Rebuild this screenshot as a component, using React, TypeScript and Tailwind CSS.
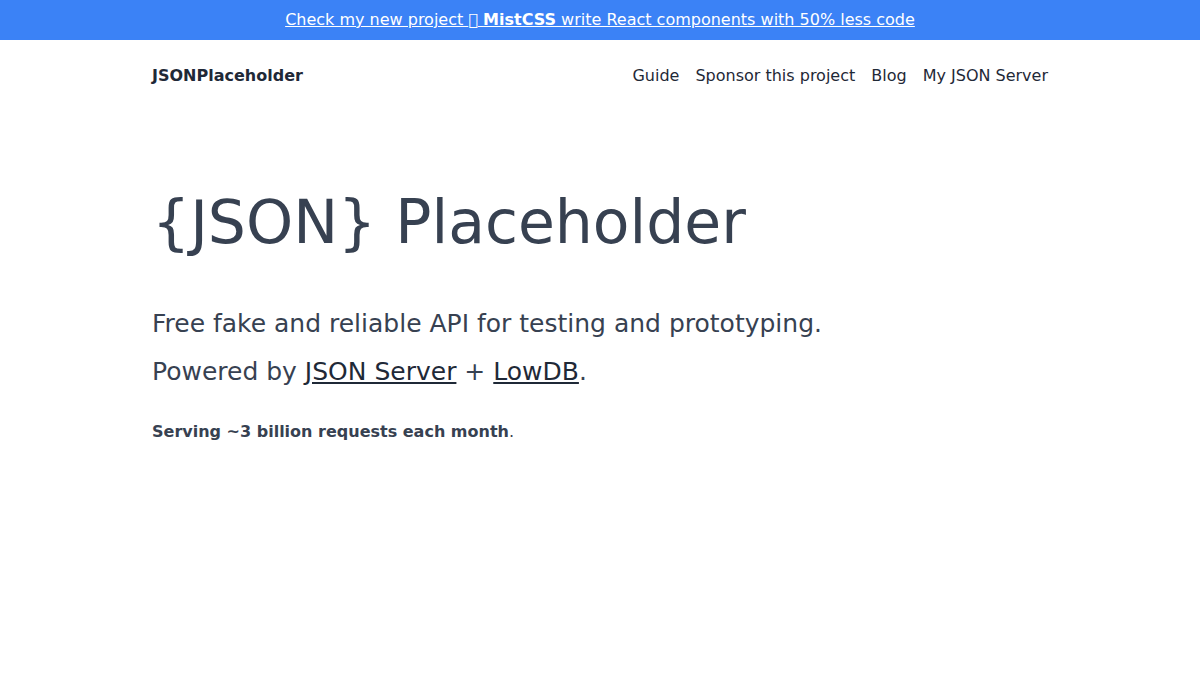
export default function App() {
  return (
    <div className="min-h-screen bg-white font-['DejaVu_Sans',sans-serif] text-[#1f2937] antialiased">
      <div className="bg-[#3b82f6] h-10 flex items-center justify-center text-white">
        <a href="#" className="underline text-base leading-6">Check my new project {"\uE0F0"} <b>MistCSS</b> write React components with 50% less code</a>
      </div>
      <div className="w-[896px] mx-auto">
        <nav className="flex justify-between items-center h-[72px]">
          <a className="font-bold text-base">JSONPlaceholder</a>
          <div className="flex gap-4 text-base">
            <a>Guide</a>
            <a>Sponsor this project</a>
            <a>Blog</a>
            <a>My JSON Server</a>
          </div>
        </nav>
        <div className="text-[#374151]">
          <h1 className="text-[60px] leading-none mt-[80px] font-normal">{"{JSON} Placeholder"}</h1>
          <p className="text-[25px] leading-8 mt-[56px]">Free fake and reliable API for testing and prototyping.</p>
          <p className="text-[25px] leading-8 mt-4">Powered by <a className="underline text-[#1f2937]">JSON Server</a> + <a className="underline text-[#1f2937]">LowDB</a>.</p>
          <p className="text-base leading-6 mt-8"><b>Serving ~3 billion requests each month</b>.</p>
        </div>
      </div>
    </div>
  );
}
